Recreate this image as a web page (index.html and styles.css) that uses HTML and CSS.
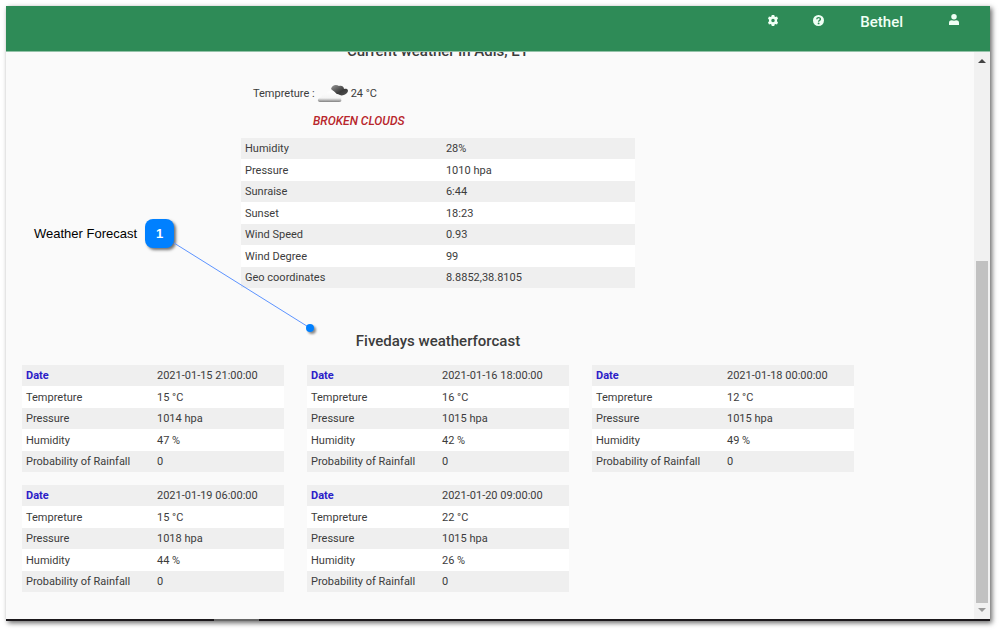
FILE: index.html
```html
<!DOCTYPE html>
<html lang="en">
<head>
<meta charset="utf-8">
<title>Weather Forecast</title>
<link rel="stylesheet" href="styles.css">
</head>
<body>
<div class="window">
  <header class="topbar">
    <button class="icon-btn" aria-label="Settings">
      <svg width="10" height="11" viewBox="0 0 20 22"><path fill="currentColor" fill-rule="evenodd" d="M7.5 0h5l.7 3 1.8 1 3-.9 2 4L18 9.500v3l2 2.400-2 4-3-.9-1.800 1-.7 3h-5l-.7-3-1.800-1-3 .9-2-4L2 12.500v-3L0 7.100l2-4 3 .9 1.800-1zM10 7.500a3.500 3.500 0 1 0 0 7 3.500 3.500 0 0 0 0-7z"/></svg>
    </button>
    <button class="icon-btn" aria-label="Help">
      <svg width="11" height="11" viewBox="0 0 22 22"><circle cx="11" cy="11" r="11" fill="currentColor"/><path d="M7.500 8.500c.2-4.500 7.500-4.300 7.300-.2-.1 2.600-3.600 2.600-3.600 5" fill="none" stroke="#2e8b57" stroke-width="2.800"/><circle cx="11.200" cy="16.800" r="1.900" fill="#2e8b57"/></svg>
    </button>
    <span class="user-name">Bethel</span>
    <button class="icon-btn icon-user" aria-label="Account">
      <svg width="10" height="11" viewBox="0 0 20 22"><circle cx="10" cy="5.500" r="5.500" fill="currentColor"/><path fill="currentColor" d="M0 22v-4.500C0 14 3 12.500 5.500 12.500c3 1.300 6 1.300 9 0 2.500 0 5.500 1.500 5.500 5V22z"/></svg>
    </button>
  </header>
  <div class="viewport">
    <main class="content">
      <section class="current">
        <h2 class="title title-current">Current weather in Adis, ET</h2>
        <p class="temp">Tempreture :
          <svg class="cloud" width="32" height="20" viewBox="0 0 32 20">
            <defs>
              <linearGradient id="dark" x1="0" y1="0" x2="1" y2="1"><stop offset="0" stop-color="#999"/><stop offset=".6" stop-color="#3a3a3a"/><stop offset="1" stop-color="#555"/></linearGradient>
              <linearGradient id="light" x1="0" y1="0" x2="0" y2="1"><stop offset="0" stop-color="#fff"/><stop offset=".65" stop-color="#f4f4f4"/><stop offset="1" stop-color="#808080"/></linearGradient>
            </defs>
            <path fill="url(#dark)" d="M14 5c1-4 5-5 8-3 3-1 5 1 5 3 4-1 5 2 3 4-2 2-5 3-8 2-3-1-5-4-8-6z"/>
            <path fill="url(#light)" d="M3 18c-3 0-3-4 1-5 1-2 3-3 5-2 1-5 8-6 10-1 4 0 7 3 5 5 1 2 0 3-2 3z"/>
          </svg>
          24 °C</p>
        <p class="condition">BROKEN CLOUDS</p>
        <table class="data">
          <tr><td>Humidity</td><td>28%</td></tr>
          <tr><td>Pressure</td><td>1010 hpa</td></tr>
          <tr><td>Sunraise</td><td>6:44</td></tr>
          <tr><td>Sunset</td><td>18:23</td></tr>
          <tr><td>Wind Speed</td><td>0.93</td></tr>
          <tr><td>Wind Degree</td><td>99</td></tr>
          <tr><td>Geo coordinates</td><td>8.8852,38.8105</td></tr>
        </table>
      </section>
      <section>
        <h2 class="title title-forecast">Fivedays weatherforcast</h2>
        <div class="forecast">
          <table class="data">
            <tr><th scope="row">Date</th><td>2021-01-15 21:00:00</td></tr>
            <tr><td>Tempreture</td><td>15 °C</td></tr>
            <tr><td>Pressure</td><td>1014 hpa</td></tr>
            <tr><td>Humidity</td><td>47 %</td></tr>
            <tr><td>Probability of Rainfall</td><td>0</td></tr>
          </table>
          <table class="data">
            <tr><th scope="row">Date</th><td>2021-01-16 18:00:00</td></tr>
            <tr><td>Tempreture</td><td>16 °C</td></tr>
            <tr><td>Pressure</td><td>1015 hpa</td></tr>
            <tr><td>Humidity</td><td>42 %</td></tr>
            <tr><td>Probability of Rainfall</td><td>0</td></tr>
          </table>
          <table class="data">
            <tr><th scope="row">Date</th><td>2021-01-18 00:00:00</td></tr>
            <tr><td>Tempreture</td><td>12 °C</td></tr>
            <tr><td>Pressure</td><td>1015 hpa</td></tr>
            <tr><td>Humidity</td><td>49 %</td></tr>
            <tr><td>Probability of Rainfall</td><td>0</td></tr>
          </table>
          <table class="data">
            <tr><th scope="row">Date</th><td>2021-01-19 06:00:00</td></tr>
            <tr><td>Tempreture</td><td>15 °C</td></tr>
            <tr><td>Pressure</td><td>1018 hpa</td></tr>
            <tr><td>Humidity</td><td>44 %</td></tr>
            <tr><td>Probability of Rainfall</td><td>0</td></tr>
          </table>
          <table class="data">
            <tr><th scope="row">Date</th><td>2021-01-20 09:00:00</td></tr>
            <tr><td>Tempreture</td><td>22 °C</td></tr>
            <tr><td>Pressure</td><td>1015 hpa</td></tr>
            <tr><td>Humidity</td><td>26 %</td></tr>
            <tr><td>Probability of Rainfall</td><td>0</td></tr>
          </table>
        </div>
      </section>
    </main>
    <div class="scrollbar" aria-hidden="true">
      <svg width="8" height="4" viewBox="0 0 8 4"><path d="M0 4l4-4 4 4z" fill="#444"/></svg>
      <div class="track"><div class="thumb"></div></div>
      <svg width="8" height="4" viewBox="0 0 8 4"><path d="M0 0l4 4 4-4z" fill="#999"/></svg>
    </div>
  </div>
  <div class="taskbar"><div class="taskbar-item"></div></div>
</div>
<div class="callout">
  <span class="callout-label">Weather Forecast</span>
  <span class="callout-badge">1</span>
</div>
<svg class="callout-line" width="150" height="100" viewBox="0 0 150 100">
  <path d="M3 1L139 86" stroke="#5c93ff" fill="none"/>
  <circle class="callout-dot" cx="139" cy="86" r="4" fill="#0080ff"/>
</svg>
</body>
</html>
```
FILE: styles.css
```css
* {
  box-sizing: border-box;
}

body {
  margin: 0;
  padding: 6px 10px 10px 6px;
  background: #fff;
  color: #3c3c3c;
  font-family: Roboto, sans-serif;
  font-size: 11px;
  line-height: 16px;
}

.window {
  display: flex;
  flex-direction: column;
  height: calc(100vh - 16px);
  background: #fafafa;
  box-shadow: 2px 2px 5px rgba(0, 0, 0, 0.6);
}

.topbar {
  display: flex;
  justify-content: flex-end;
  align-items: flex-start;
  flex: none;
  height: 46px;
  padding: 6px 30px 0 0;
  background: #2e8b57;
  border-bottom: 1px solid #93c2a8;
  color: #f0fff5;
}

.icon-btn {
  display: flex;
  justify-content: center;
  align-items: center;
  width: 12px;
  height: 16px;
  margin-right: 33px;
  padding: 0;
  border: 0;
  background: none;
  color: inherit;
}

.user-name {
  padding: 2px 0;
  margin-right: 45px;
  margin-left: 3px;
  font-size: 15px;
  font-weight: 500;
}

.icon-user {
  height: 14px;
  margin-right: 0;
}

.viewport {
  display: flex;
  flex: 1;
  min-height: 0;
  overflow: hidden;
}

.content {
  flex: 1;
  max-width: 848px;
  padding-left: 16px;
}

.current {
  width: 394px;
  margin: 0 auto;
}

.title {
  margin: 0;
  font-size: 15px;
  font-weight: 500;
  line-height: 20px;
  text-align: center;
}

.title-current {
  margin-top: -11px;
}

.title-forecast {
  margin: 43px 0 14px;
}

.temp {
  display: flex;
  align-items: center;
  gap: 2px;
  margin: 23px 0 9px;
  padding-left: 12px;
}

.condition {
  margin: 0 0 9px;
  padding-left: 72px;
  color: #b8262c;
  font-size: 12px;
  font-style: italic;
  font-weight: 500;
}

.data {
  width: 100%;
  border-collapse: collapse;
  table-layout: fixed;
}

.data tr {
  height: 22px;
  background: #fff;
}

.data tr:nth-child(odd) {
  height: 21px;
  background: #efefef;
}

.data td,
.data th {
  padding: 1px 4px 0;
  text-align: left;
  white-space: nowrap;
}

.data td:first-child {
  width: 51%;
}

.data th {
  color: #2c20c8;
  font-weight: 700;
}

.forecast {
  display: grid;
  grid-template-columns: repeat(3, 1fr);
  gap: 13px 23px;
}

.scrollbar {
  display: flex;
  flex-direction: column;
  align-items: center;
  width: 16px;
  margin-left: auto;
  padding: 7px 0;
  background: #f1f1f1;
}

.track {
  display: flex;
  flex: 1;
  flex-direction: column;
  justify-content: flex-end;
  padding: 5px 0;
}

.thumb {
  width: 12px;
  height: 64%;
  background: #c1c1c1;
}

.taskbar {
  flex: none;
  height: 2px;
  padding-left: 208px;
  background: #1b181b;
}

.taskbar-item {
  width: 45px;
  height: 2px;
  background: #666;
}

.callout {
  position: absolute;
  top: 219px;
  left: 34px;
  display: flex;
  align-items: center;
  gap: 8px;
  color: #000;
  font-family: "Liberation Sans", sans-serif;
  font-size: 13px;
}

.callout-badge {
  width: 29px;
  height: 29px;
  border-radius: 8px;
  background: #0080ff;
  box-shadow: 2px 2px 3px rgba(0, 0, 0, 0.55);
  color: #fff;
  font-weight: 700;
  line-height: 29px;
  text-align: center;
}

.callout-line {
  position: absolute;
  top: 242px;
  left: 171px;
}

.callout-dot {
  filter: drop-shadow(2px 2px 1px rgba(0, 0, 0, 0.45));
}
```
